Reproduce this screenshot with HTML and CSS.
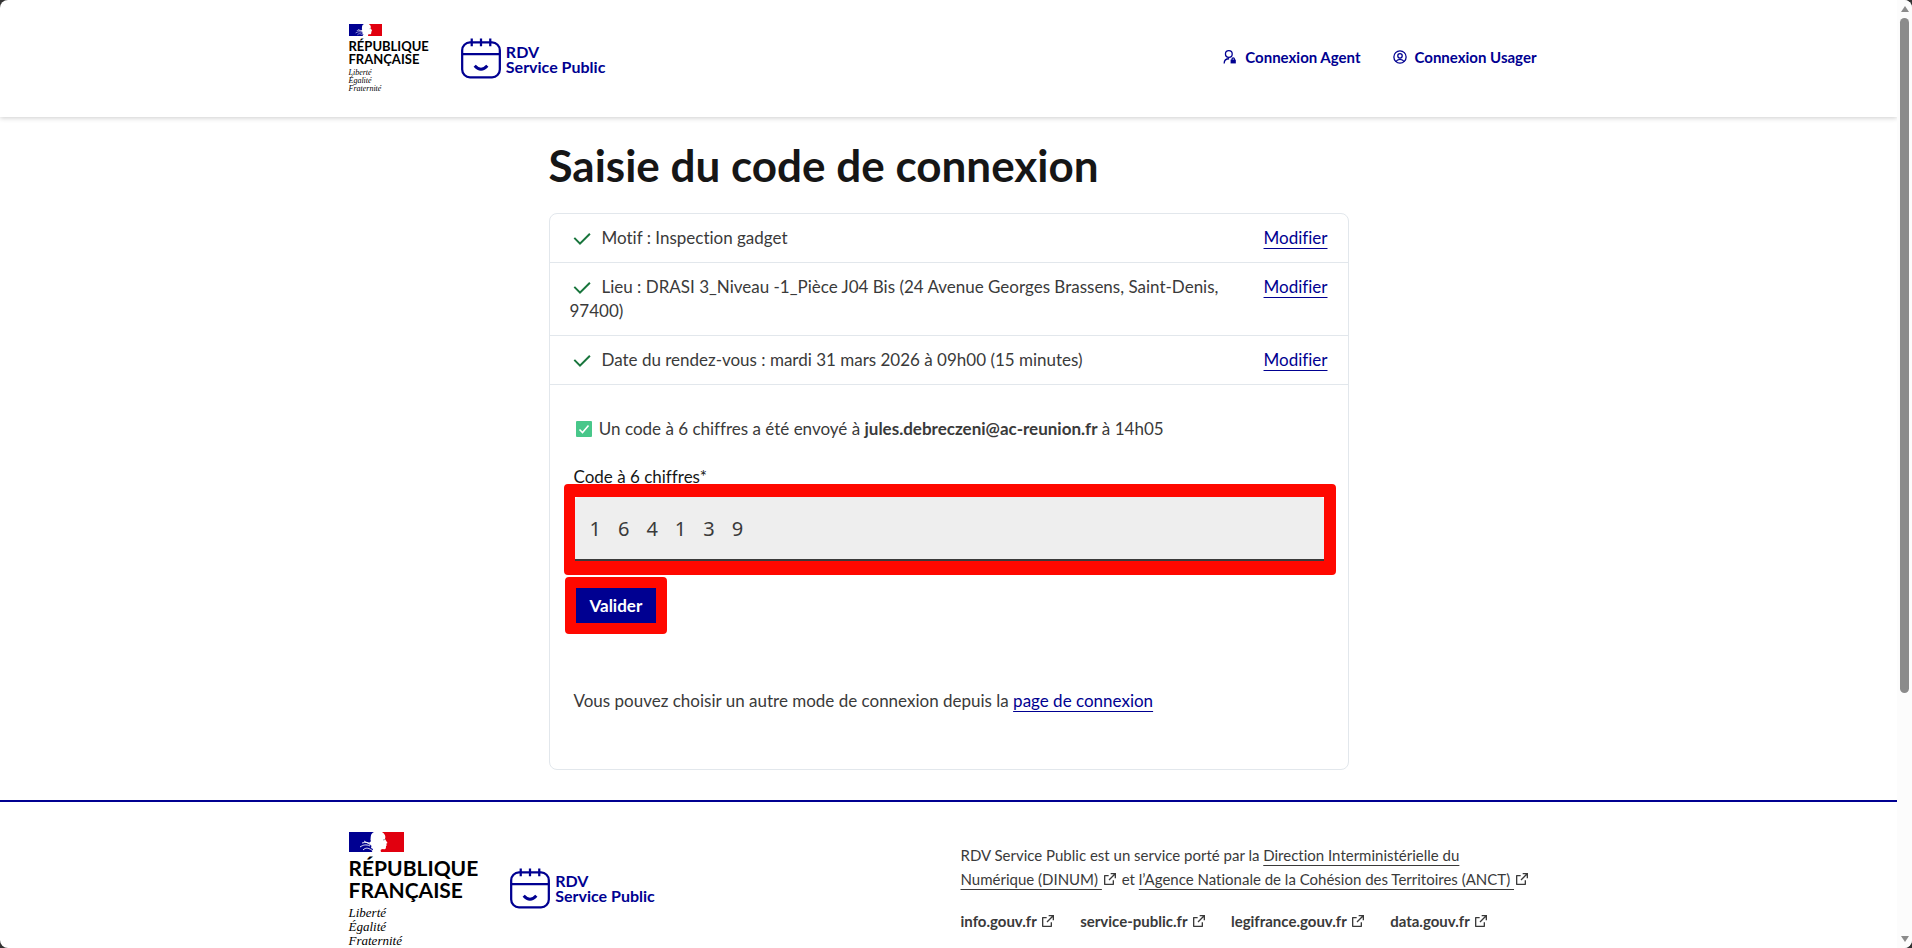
FILE: index.html
```html
<!DOCTYPE html>
<html lang="fr">
<head>
<meta charset="UTF-8">
<meta name="viewport" content="width=device-width, initial-scale=1.0">
<title>Saisie du code de connexion - RDV Service Public</title>
<link rel="stylesheet" href="styles.css">
</head>
<body>
<!-- Shared icons -->
<svg class="sprite" aria-hidden="true">
  <symbol id="marianne" viewBox="0 0 55 20">
    <path fill="#000091" d="M0 0h25v20H0z"/>
    <path fill="#e1000f" d="M31 0h24v20H31z"/>
    <path fill="#fff" d="M25 0C21 2 22 5 21.500 8c1 1 0 2-1.500 3 2 1 3 3 2 5l2 1-1 3h9c-1-2 0-3 2-3 3 1 3-1 3-3l1-1-1-1 1.500-1L36 7c1-3 0-5-3-7z"/>
    <path fill="none" stroke="#fff" stroke-width=".9" d="M13 11c4-1 6-1 9 1M11 15c3-2 6-3 10-1M14 18c3-3 6-2 10 1M15 9l7 4"/>
    <path fill="none" stroke="#777" stroke-width=".7" d="M34 8l2.500-.6"/>
  </symbol>
  <symbol id="calendar" viewBox="0 0 41 41">
    <g fill="none" stroke="#000091" stroke-width="2.300">
      <rect x="1.200" y="4" width="38.600" height="35.800" rx="8"/>
      <path d="M1 16h39M11 0v8M20.500 0v8M30 0v8"/>
      <path stroke-width="3" d="M14 28q6.500 7 13 0"/>
    </g>
  </symbol>
  <symbol id="external" viewBox="0 0 24 24">
    <path fill="currentColor" d="M10 6v2H5v11h11v-5h2v6a1 1 0 0 1-1 1H4a1 1 0 0 1-1-1V7a1 1 0 0 1 1-1h6zm11-3v8h-2V6.400l-7.800 7.800-1.400-1.400L17.600 5H13V3h8z"/>
  </symbol>
  <symbol id="check" viewBox="0 0 24 24">
    <path fill="currentColor" d="m10 15.200 9.200-9.200 1.400 1.400L10 18l-6.400-6.400L5 10.200z"/>
  </symbol>
</svg>

<div class="window">
  <div class="page">
    <header class="header">
      <div class="container header-row">
        <a class="brand" href="#">
          <span class="republic">
            <svg class="flag"><use href="#marianne"/></svg>
            <span class="republic-name">RÉPUBLIQUE<br>FRANÇAISE</span>
            <span class="motto">Liberté<br>Égalité<br>Fraternité</span>
          </span>
          <span class="service">
            <svg class="calendar"><use href="#calendar"/></svg>
            <span>RDV<br>Service Public</span>
          </span>
        </a>
        <nav class="quick-links">
          <a href="#">
            <svg viewBox="0 0 24 24"><g fill="none" stroke="currentColor" stroke-width="2.200"><circle cx="10" cy="7" r="5.800"/><path d="M2 23c0-5 3-8 8.500-8"/><path d="M15.500 17v-1.500a2 2 0 0 1 4 0V17"/></g><path fill="currentColor" d="M13 16.500h9V23h-9z"/></svg>
            Connexion Agent
          </a>
          <a href="#">
            <svg viewBox="0 0 24 24"><g fill="none" stroke="currentColor" stroke-width="2.200"><circle cx="12" cy="12" r="10.500"/><circle cx="12" cy="10" r="3.800"/><path d="M5 20c3-5 11-5 14 0"/></g></svg>
            Connexion Usager
          </a>
        </nav>
      </div>
    </header>

    <main class="main">
      <h1>Saisie du code de connexion</h1>
      <div class="card">
        <ul class="steps">
          <li>
            <span><svg class="check"><use href="#check"/></svg>Motif : Inspection gadget</span>
            <a href="#">Modifier</a>
          </li>
          <li>
            <span><svg class="check"><use href="#check"/></svg>Lieu : DRASI 3_Niveau -1_Pièce J04 Bis (24 Avenue Georges Brassens, Saint-Denis, 97400)</span>
            <a href="#">Modifier</a>
          </li>
          <li>
            <span><svg class="check"><use href="#check"/></svg>Date du rendez-vous : mardi 31 mars 2026 à 09h00 (15 minutes)</span>
            <a href="#">Modifier</a>
          </li>
        </ul>
        <form class="login">
          <p>
            <svg class="tick" viewBox="0 0 16 16"><rect width="16" height="16" rx="1" fill="#48c78a"/><path fill="none" stroke="#fff" stroke-width="1.600" d="M3.500 8.500l3 3 6-7"/></svg>
            Un code à 6 chiffres a été envoyé à <strong>jules.debreczeni@ac-reunion.fr</strong> à 14h05
          </p>
          <label for="code">Code à 6 chiffres*</label>
          <div class="highlight highlight-input">
            <input id="code" type="text" inputmode="numeric" maxlength="6" value="164139">
          </div>
          <div class="highlight highlight-button">
            <button type="button">Valider</button>
          </div>
          <p class="other">Vous pouvez choisir un autre mode de connexion depuis la <a href="#">page de connexion</a></p>
        </form>
      </div>
    </main>

    <footer class="footer">
      <div class="container footer-row">
        <a class="brand brand-large" href="#">
          <span class="republic">
            <svg class="flag"><use href="#marianne"/></svg>
            <span class="republic-name">RÉPUBLIQUE<br>FRANÇAISE</span>
            <span class="motto">Liberté<br>Égalité<br>Fraternité</span>
          </span>
          <span class="service">
            <svg class="calendar"><use href="#calendar"/></svg>
            <span>RDV<br>Service Public</span>
          </span>
        </a>
        <div class="footer-content">
          <p>RDV Service Public est un service porté par la <a href="#">Direction Interministérielle du<br>Numérique (DINUM) <svg class="external"><use href="#external"/></svg></a> et <a href="#">l’Agence Nationale de la Cohésion des Territoires (ANCT) <svg class="external"><use href="#external"/></svg></a></p>
          <ul class="footer-links">
            <li><a href="#">info.gouv.fr <svg class="external"><use href="#external"/></svg></a></li>
            <li><a href="#">service-public.fr <svg class="external"><use href="#external"/></svg></a></li>
            <li><a href="#">legifrance.gouv.fr <svg class="external"><use href="#external"/></svg></a></li>
            <li><a href="#">data.gouv.fr <svg class="external"><use href="#external"/></svg></a></li>
          </ul>
        </div>
      </div>
    </footer>
  </div>

  <div class="scrollbar" aria-hidden="true">
    <span class="arrow arrow-up"></span>
    <span class="track"><span class="thumb"></span></span>
    <span class="arrow arrow-down"></span>
  </div>
</div>
</body>
</html>
```
FILE: styles.css
```css
:root {
  --blue: #000091;
  --text: #3a3a3a;
  --title: #161616;
  --border: #e2e7ec;
  --red: #ff0800;
  --font-family: Lato, "Open Sans", sans-serif;
}

* {
  box-sizing: border-box;
}

body {
  margin: 0;
  background: #333;
  color: var(--text);
  font-family: var(--font-family);
  font-size: 17px;
  font-variant-ligatures: none;
  line-height: 24px;
}

p,
ul {
  margin: 0;
  padding: 0;
  list-style: none;
}

a {
  color: var(--blue);
  text-decoration: none;
}

.sprite {
  display: none;
}

.window {
  display: flex;
  height: 100vh;
  overflow: hidden;
  border-radius: 8px;
  background: #fff;
}

.page {
  flex: 1;
  min-width: 0;
  overflow: hidden;
}

.container {
  max-width: 1200px;
  margin: 0 auto;
}

/* Header */
.header {
  padding: 24px 0;
  box-shadow: 0 1px 5px rgba(0, 0, 0, 0.2);
}

.header-row {
  display: flex;
  justify-content: space-between;
  align-items: flex-start;
}

.brand {
  display: flex;
  align-items: center;
  gap: 32px;
}

.republic {
  display: flex;
  flex-direction: column;
  color: #000;
}

.flag {
  width: 33px;
  height: 12px;
}

.republic-name {
  margin-top: 4px;
  font-size: 13px;
  font-weight: 700;
  line-height: 13px;
}

.motto {
  margin-top: 3px;
  font-family: "Liberation Serif", serif;
  font-size: 8px;
  font-style: italic;
  line-height: 8px;
}

.service {
  display: flex;
  align-items: center;
  gap: 5px;
  color: var(--blue);
  font-size: 16px;
  font-weight: 700;
  line-height: 15px;
}

.calendar {
  width: 40px;
  height: 41px;
}

.quick-links {
  display: flex;
  gap: 32px;
  padding: 21px 12px 0 0;
  font-size: 15px;
  font-weight: 700;
}

.quick-links a {
  display: flex;
  align-items: center;
  gap: 8px;
}

.quick-links svg {
  width: 14px;
  height: 14px;
}

/* Login card */
.main {
  max-width: 800px;
  margin: 0 auto;
  padding: 24px 0 30px;
}

h1 {
  margin: 0 0 24px;
  color: var(--title);
  font-size: 44px;
  font-weight: 700;
  line-height: 48px;
}

.card {
  border: 1px solid var(--border);
  border-radius: 8px;
}

.steps li {
  display: flex;
  justify-content: space-between;
  gap: 32px;
  padding: 12px 20px;
  border-bottom: 1px solid var(--border);
}

.steps a,
.other a,
.footer-content p a {
  text-decoration: underline;
  text-decoration-thickness: 1px;
  text-decoration-skip-ink: none;
  text-underline-offset: 4px;
}

.check {
  width: 24px;
  height: 24px;
  margin: -2px 8px -2px 0;
  color: #18753c;
  vertical-align: -5px;
}

.login {
  padding: 32px 24px 56px;
}

.tick {
  width: 16px;
  height: 16px;
  margin: 0 3px 0 2px;
  vertical-align: -2px;
}

.login label {
  display: block;
  margin-top: 24px;
  color: var(--title);
}

/* Red frames around the two things to act on */
.highlight {
  border: 11px solid var(--red);
  border-radius: 4px;
}

.highlight-input {
  margin: -5px -12px 0 -10px;
  border-width: 13px 12px 14px 11px;
}

.highlight input {
  display: block;
  width: 100%;
  height: 64px;
  padding: 0 15px;
  border: 0;
  border-bottom: 2px solid var(--text);
  border-radius: 4px 4px 0 0;
  background: #eee;
  color: var(--text);
  font-family: "Noto Sans", sans-serif;
  font-size: 20px;
  letter-spacing: 17px;
}

.highlight-button {
  width: fit-content;
  margin: 2px 0 0 -9px;
}

.highlight button {
  display: block;
  height: 35px;
  padding: 0 14px;
  border: 0;
  background: var(--blue);
  color: #fff;
  font-family: inherit;
  font-size: 17px;
  font-weight: 700;
}

.other {
  margin-top: 55px;
}

/* Footer */
.footer {
  padding-top: 30px;
  border-top: 2px solid var(--blue);
}

.footer-row {
  display: grid;
  grid-template-columns: 1fr 588px;
  align-items: start;
  gap: 24px;
}

.brand-large .flag {
  width: 55px;
  height: 20px;
}

.brand-large .republic-name {
  margin-top: 5px;
  font-size: 21px;
  line-height: 22px;
}

.brand-large .motto {
  margin-top: 5px;
  font-size: 13px;
  line-height: 14px;
}

.brand-large .service {
  padding-bottom: 4px;
}

.footer-content {
  padding-top: 11px;
  font-size: 15px;
}

.footer-content a {
  color: var(--text);
}

.external {
  width: 16px;
  height: 16px;
  vertical-align: -2px;
}

.footer-links {
  display: flex;
  gap: 24px;
  margin-top: 18px;
  font-weight: 700;
}

/* Window scrollbar */
.scrollbar {
  display: flex;
  flex-direction: column;
  align-items: center;
  width: 15px;
  padding: 6px 0;
  background: #fcfcfc;
}

.track {
  flex: 1;
  width: 9px;
  margin: 6px 0;
}

.thumb {
  display: block;
  height: 74%;
  border-radius: 5px;
  background: #8b8b8b;
}

.arrow {
  border: 4px solid transparent;
}

.arrow-up {
  border-top: 0;
  border-bottom: 6px solid #8b8b8b;
}

.arrow-down {
  border-top: 6px solid #8b8b8b;
  border-bottom: 0;
}
```
